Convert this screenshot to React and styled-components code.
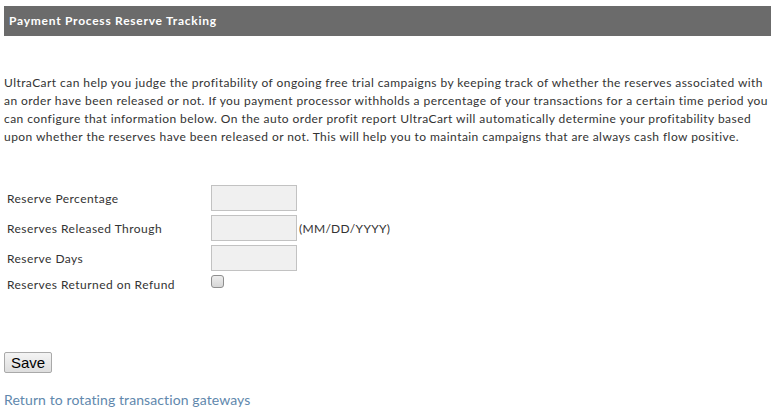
import styled, { createGlobalStyle } from "styled-components";

const GlobalStyle = createGlobalStyle`
  body {
    margin: 0;
    background: #fff;
    font-family: Lato, "Open Sans", sans-serif;
    color: #333;
  }
`;

const Page = styled.div`
  padding: 6px 0 0 4px;
`;

const Header = styled.h1`
  margin: 0;
  height: 30px;
  line-height: 30px;
  padding-left: 5px;
  background-color: #6b6b6b;
  color: #fff;
  font-size: 12px;
  font-weight: 700;
  letter-spacing: 0.75px;
`;

const Intro = styled.p`
  margin: 38px 0 0;
  font-size: 12px;
  line-height: 18px;
  letter-spacing: 0.44px;
  white-space: nowrap;
`;

const Form = styled.form`
  margin-top: 39px;
  padding-left: 3px;
`;

const Row = styled.div`
  display: flex;
  align-items: center;
  height: ${(p) => p.$height || 26}px;
  margin-bottom: 4px;
`;

const Label = styled.label`
  width: 204px;
  font-size: 12px;
  letter-spacing: 0.45px;
  padding-top: ${(p) => p.$offset || 0}px;
`;

const TextInput = styled.input`
  box-sizing: border-box;
  width: 86px;
  height: 26px;
  margin: 0;
  border: 1px solid #c2c2c2;
  background: #f0f0f0;
`;

const Hint = styled.span`
  margin-left: 2px;
  font-size: 12px;
  letter-spacing: 0.3px;
`;

const Checkbox = styled.input.attrs({ type: "checkbox" })`
  appearance: none;
  box-sizing: border-box;
  width: 13px;
  height: 13px;
  margin: 0 0 3px;
  border: 1px solid #8e8e8e;
  border-radius: 3px;
  background: linear-gradient(#ededed, #d6d6d6);
`;

const SaveButton = styled.button`
  display: block;
  margin-top: 61px;
  height: 21px;
  width: 48px;
  padding: 0;
  border: 1px solid #a9a9a9;
  border-radius: 2px;
  background: linear-gradient(#f4f4f4, #dedede);
  font-family: "Liberation Sans", Arial, sans-serif;
  font-size: 15px;
  color: #000;
`;

const BackLink = styled.a`
  display: inline-block;
  margin-top: 18px;
  color: #6188ad;
  font-size: 14px;
  letter-spacing: 0.1px;
  text-decoration: none;
`;

export default function App() {
  return (
    <>
      <GlobalStyle />
      <Page>
        <Header>Payment Process Reserve Tracking</Header>
        <Intro>
          UltraCart can help you judge the profitability of ongoing free trial
          campaigns by keeping track of whether the reserves associated with
          <br />
          an order have been released or not. If you payment processor
          withholds a percentage of your transactions for a certain time period
          you
          <br />
          can configure that information below. On the auto order profit report
          UltraCart will automatically determine your profitability based
          <br />
          upon whether the reserves have been released or not. This will help
          you to maintain campaigns that are always cash flow positive.
        </Intro>
        <Form onSubmit={(e) => e.preventDefault()}>
          <Row>
            <Label htmlFor="pct">Reserve Percentage</Label>
            <TextInput id="pct" type="text" />
          </Row>
          <Row>
            <Label htmlFor="through">Reserves Released Through</Label>
            <TextInput id="through" type="text" />
            <Hint>(MM/DD/YYYY)</Hint>
          </Row>
          <Row>
            <Label htmlFor="days">Reserve Days</Label>
            <TextInput id="days" type="text" />
          </Row>
          <Row $height={16}>
            <Label htmlFor="refund" $offset={2}>Reserves Returned on Refund</Label>
            <Checkbox id="refund" />
          </Row>
        </Form>
        <SaveButton type="button">Save</SaveButton>
        <BackLink href="#">Return to rotating transaction gateways</BackLink>
      </Page>
    </>
  );
}
